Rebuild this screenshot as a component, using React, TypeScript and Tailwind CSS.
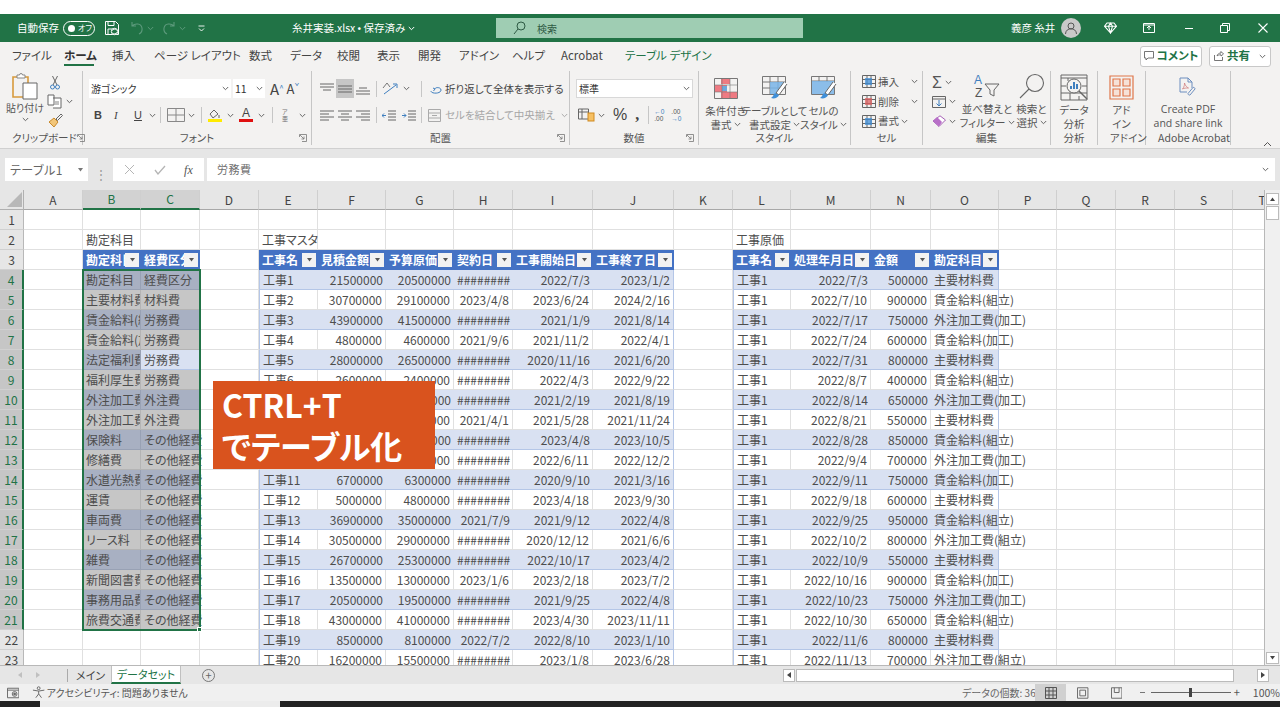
import type { ReactNode } from "react";

const COLUMNS = "ABCDEFGHIJKLMNOPQRST".split("");
const GRID = "grid grid-cols-[24px_59px_58px_59px_59px_59px_68px_68px_59px_80px_81px_59px_58px_80px_60px_68px_58px_59px_59px_58px_59px]";

const accounts = [
  ["勘定科目", "経費区分"],
  ["主要材料費", "材料費"],
  ["賃金給料(組立)", "労務費"],
  ["賃金給料(加工)", "労務費"],
  ["法定福利費", "労務費"],
  ["福利厚生費", "労務費"],
  ["外注加工費(組立)", "外注費"],
  ["外注加工費(加工)", "外注費"],
  ["保険料", "その他経費"],
  ["修繕費", "その他経費"],
  ["水道光熱費", "その他経費"],
  ["運賃", "その他経費"],
  ["車両費", "その他経費"],
  ["リース料", "その他経費"],
  ["雑費", "その他経費"],
  ["新聞図書費", "その他経費"],
  ["事務用品費", "その他経費"],
  ["旅費交通費", "その他経費"],
];

const master = [
  ["工事1", "21500000", "20500000", "########", "2022/7/3", "2023/1/2"],
  ["工事2", "30700000", "29100000", "2023/4/8", "2023/6/24", "2024/2/16"],
  ["工事3", "43900000", "41500000", "########", "2021/1/9", "2021/8/14"],
  ["工事4", "4800000", "4600000", "2021/9/6", "2021/11/2", "2022/4/1"],
  ["工事5", "28000000", "26500000", "########", "2020/11/16", "2021/6/20"],
  ["工事6", "2600000", "2400000", "########", "2022/4/3", "2022/9/22"],
  ["工事7", "9800000", "9300000", "########", "2021/2/19", "2021/8/19"],
  ["工事8", "12600000", "12000000", "2021/4/1", "2021/5/28", "2021/11/24"],
  ["工事9", "33600000", "32000000", "########", "2023/4/8", "2023/10/5"],
  ["工事10", "18900000", "18000000", "########", "2022/6/11", "2022/12/2"],
  ["工事11", "6700000", "6300000", "########", "2020/9/10", "2021/3/16"],
  ["工事12", "5000000", "4800000", "########", "2023/4/18", "2023/9/30"],
  ["工事13", "36900000", "35000000", "2021/7/9", "2021/9/12", "2022/4/8"],
  ["工事14", "30500000", "29000000", "########", "2020/12/12", "2021/6/6"],
  ["工事15", "26700000", "25300000", "########", "2022/10/17", "2023/4/2"],
  ["工事16", "13500000", "13000000", "2023/1/6", "2023/2/18", "2023/7/2"],
  ["工事17", "20500000", "19500000", "########", "2021/9/25", "2022/4/8"],
  ["工事18", "43000000", "41000000", "########", "2023/4/30", "2023/11/11"],
  ["工事19", "8500000", "8100000", "2022/7/2", "2022/8/10", "2023/1/10"],
  ["工事20", "16200000", "15500000", "########", "2023/1/8", "2023/6/28"],
];

const costs = [
  ["2022/7/3", "500000", "主要材料費"],
  ["2022/7/10", "900000", "賃金給料(組立)"],
  ["2022/7/17", "750000", "外注加工費(加工)"],
  ["2022/7/24", "600000", "賃金給料(加工)"],
  ["2022/7/31", "800000", "主要材料費"],
  ["2022/8/7", "400000", "賃金給料(組立)"],
  ["2022/8/14", "650000", "外注加工費(加工)"],
  ["2022/8/21", "550000", "主要材料費"],
  ["2022/8/28", "850000", "賃金給料(組立)"],
  ["2022/9/4", "700000", "外注加工費(加工)"],
  ["2022/9/11", "750000", "賃金給料(加工)"],
  ["2022/9/18", "600000", "主要材料費"],
  ["2022/9/25", "950000", "賃金給料(組立)"],
  ["2022/10/2", "800000", "外注加工費(組立)"],
  ["2022/10/9", "550000", "主要材料費"],
  ["2022/10/16", "900000", "賃金給料(加工)"],
  ["2022/10/23", "750000", "外注加工費(加工)"],
  ["2022/10/30", "650000", "賃金給料(組立)"],
  ["2022/11/6", "800000", "主要材料費"],
  ["2022/11/13", "700000", "外注加工費(組立)"],
];

function Chev({ className = "", color = "#666" }: { className?: string; color?: string }) {
  return (
    <svg width="7" height="5" viewBox="0 0 7 5" className={className} fill="none" stroke={color} strokeWidth="1">
      <path d="M.8 1 3.5 3.7 6.2 1" />
    </svg>
  );
}

function Launcher() {
  return (
    <svg width="8" height="8" viewBox="0 0 8 8" fill="none" stroke="#777" strokeWidth=".8">
      <path d="M.5 3V.5h7v7H3" />
      <path d="M1 1l4 4M5 2.5V5H2.5" />
    </svg>
  );
}

// ribbon group: content on top, caption row with optional dialog launcher
function Group({ w, label, launcher, children }: { w: string; label: string; launcher?: boolean; children: ReactNode }) {
  return (
    <div className={`${w} h-[74px] shrink-0 flex flex-col border-r border-[#c6c6c6]`}>
      <div className="h-[60px] flex">{children}</div>
      <div className="h-[14px] grid grid-cols-[12px_1fr_12px] items-center text-[10.5px] leading-[14px] text-[#555] text-center whitespace-nowrap">
        <span />
        <span>{label}</span>
        <span className="flex justify-start">{launcher && <Launcher />}</span>
      </div>
    </div>
  );
}

function BigButton({ w, icon, lines }: { w: string; icon: ReactNode; lines: ReactNode[] }) {
  return (
    <div className={`${w} flex flex-col items-center`}>
      <div className="h-[30px] flex items-center justify-center">{icon}</div>
      {lines.map((l, i) => (
        <div key={i} className="h-[13px] mt-[1px] flex items-center gap-[2px] text-[10.5px] leading-[13px] text-[#555] whitespace-nowrap">{l}</div>
      ))}
    </div>
  );
}

function AlignIcon({ rows, active }: { rows: number[][]; active?: boolean }) {
  return (
    <span className={`w-[18px] h-[19px] flex items-center justify-center ${active ? "bg-[#c6c6c6]" : ""}`}>
      <svg width="14" height="12" viewBox="0 0 14 12" stroke="#666" strokeWidth="1">
        {rows.map((r, i) => (
          <line key={i} x1={r[0]} x2={r[1]} y1={r[2]} y2={r[2]} />
        ))}
      </svg>
    </span>
  );
}

function HeaderCell({ text }: { text: string }) {
  return (
    <div className="relative h-5 bg-[#4472c4] text-white font-bold px-[3px] text-[12px] leading-[19px] overflow-hidden whitespace-nowrap">
      {text}
      <span className="absolute right-[2px] top-[3px] w-[14px] h-[14px] bg-[#f2f2f2] flex items-center justify-center">
        <svg width="7" height="4" viewBox="0 0 7 4"><path d="M1 0h5L3.5 3.5z" fill="#555" /></svg>
      </span>
    </div>
  );
}

function Plain({ text = "", right, clip, cls = "bg-white border-r border-b border-[#e0e0e0]" }: { text?: string; right?: boolean; clip?: boolean; cls?: string }) {
  return (
    <div className={`h-5 px-[3px] text-[12px] leading-[19px] whitespace-nowrap text-[#4d4d4d] ${cls} ${right ? "text-right" : ""} ${clip ? "overflow-hidden" : ""}`}>
      {text}
    </div>
  );
}

const BAND = "bg-[#d9e1f2] border-b border-[#b4c6e7]";
const BANDL = "bg-[#d9e1f2] border-b border-l border-[#b4c6e7]";
const BANDR = "bg-[#d9e1f2] border-b border-r border-[#b4c6e7]";
const WHITE = "bg-white border-b border-r border-[#e0e0e0]";
const WHITEL = "bg-white border-b border-l border-r border-l-[#b4c6e7] border-y-[#e0e0e0] border-r-[#e0e0e0]";
const WHITEE = "bg-white border-b border-[#e0e0e0] border-b-[#b4c6e7]";
const SELBAND = "bg-[#a8b0c2] border-b border-r border-[#98a1b4]";
const SELGRAY = "bg-[#c6c6c6] border-b border-r border-[#b4b4b4]";

function Row({ n }: { n: number }) {
  const selected = n >= 4 && n <= 21;
  const cells: ReactNode[] = [];
  for (let c = 0; c < COLUMNS.length; c++) {
    const col = COLUMNS[c];
    const key = col + n;
    const band = n % 2 === 0;
    if (n === 2 && col === "B") cells.push(<Plain key={key} text="勘定科目" />);
    else if (n === 2 && col === "E") cells.push(<Plain key={key} text="工事マスタ" />);
    else if (n === 2 && col === "L") cells.push(<Plain key={key} text="工事原価" />);
    else if (n === 3 && "BC".includes(col)) cells.push(<HeaderCell key={key} text={col === "B" ? "勘定科目" : "経費区分"} />);
    else if (n === 3 && "EFGHIJ".includes(col)) cells.push(<HeaderCell key={key} text={["工事名", "見積金額", "予算原価", "契約日", "工事開始日", "工事終了日"]["EFGHIJ".indexOf(col)]} />);
    else if (n === 3 && "LMNO".includes(col)) cells.push(<HeaderCell key={key} text={["工事名", "処理年月日", "金額", "勘定科目"]["LMNO".indexOf(col)]} />);
    else if (selected && col === "B") cells.push(<Plain key={key} text={accounts[n - 4][0]} clip cls={band ? SELBAND : SELGRAY} />);
    else if (selected && col === "C") {
      const active = n === 8;
      cells.push(<Plain key={key} text={accounts[n - 4][1]} cls={active ? BANDR + " relative z-10" : (band ? SELBAND : SELGRAY) + " relative z-10"} />);
    } else if (n >= 4 && "EFGHIJ".includes(col)) {
      const i = "EFGHIJ".indexOf(col);
      const last = col === "J";
      const first = col === "E";
      const cls = band ? (first ? BANDL : last ? BANDR : BAND) : first ? WHITEL : last ? "bg-white border-b border-r border-[#e0e0e0] border-r-[#b4c6e7]" : WHITE;
      cells.push(<Plain key={key} text={master[n - 4][i]} right={i > 0} cls={cls} />);
    } else if (n >= 4 && "LMNO".includes(col)) {
      const i = "LMNO".indexOf(col);
      const text = i === 0 ? "工事1" : costs[n - 4][i - 1];
      const first = col === "L";
      const last = col === "O";
      const cls = band ? (first ? BANDL : last ? BANDR : BAND) : first ? WHITEL : last ? "bg-white border-b border-r border-[#e0e0e0] border-r-[#b4c6e7]" : WHITE;
      cells.push(<Plain key={key} text={text} right={i === 1 || i === 2} cls={cls + (last ? " relative z-10" : "")} />);
    } else cells.push(<Plain key={key} />);
  }
  return (
    <>
      <div className={`h-5 flex items-center justify-center text-[12px] ${selected ? "bg-[#c6c6c6] text-[#217346] border-r-2 border-[#217346]" : "bg-[#e6e6e6] text-[#444] border-r border-[#b8b8b8]"} border-b border-b-[#d0d0d0]`}>
        {n}
      </div>
      {cells}
    </>
  );
}

function SheetGrid() {
  const rows = Array.from({ length: 23 }, (_, i) => i + 1);
  return (
    <div className="relative w-[1264px] h-[475px] overflow-hidden shrink-0">
      <div className={`${GRID} w-[1292px]`}>
        <div className="h-5 bg-[#e6e6e6] border-r border-b border-[#b0b0b0] relative">
          <svg width="15" height="15" viewBox="0 0 15 15" className="absolute right-[1px] bottom-[2px]"><path d="M15 0v15H0z" fill="#b8b8b8" /></svg>
        </div>
        {COLUMNS.map((c) => {
          const sel = c === "B" || c === "C";
          return (
            <div key={c} className={`h-5 flex items-center justify-center text-[12px] border-r border-[#cfcfcf] ${sel ? "bg-[#d2d2d2] text-[#217346] border-b-2 border-b-[#217346]" : "bg-[#e6e6e6] text-[#444] border-b border-b-[#a8a8a8]"}`}>
              {c}
            </div>
          );
        })}
        {rows.map((n) => <Row key={n} n={n} />)}
      </div>
      {/* selection frame */}
      <div className="absolute left-[82px] top-[79px] w-[119px] h-[362px] border-2 border-[#217346] z-20">
        <span className="absolute -right-[3px] -bottom-[3px] w-[5px] h-[5px] bg-[#217346] border border-white" />
      </div>
    </div>
  );
}

function SaveIcon() {
  return (
    <svg width="14" height="15" viewBox="0 0 14 15" fill="none" stroke="#fff" strokeWidth="1">
      <path d="M.5.5h10l3 3v10H.5z" />
      <path d="M3 .5v4h6v-4M3 13.5V8h5" />
      <circle cx="9.5" cy="10.5" r="3.2" fill="#217346" />
      <path d="M7.5 9.5a2.4 2.4 0 0 1 4-.5M11.5 11.5a2.4 2.4 0 0 1-4 .5" />
    </svg>
  );
}

function TitleBar() {
  return (
    <div className="h-[28px] bg-[#217346] flex items-center text-white shrink-0">
      <span className="ml-[17px] w-[41px] text-[10.5px] whitespace-nowrap">自動保存</span>
      <span className="ml-[5px] w-[32px] h-[15px] rounded-full border border-white flex items-center gap-[3px] pl-[4px]">
        <span className="w-[7px] h-[7px] rounded-full bg-white" />
        <span className="text-[8px] leading-none">オフ</span>
      </span>
      <span className="ml-[10px] flex"><SaveIcon /></span>
      <svg width="14" height="14" viewBox="0 0 14 14" fill="none" stroke="#5d9a7c" strokeWidth="1.1" className="ml-[11px]">
        <path d="M2 1v4h4M2 5c3-3 9-3 10 2 .4 2.5-1 5-3 6" />
      </svg>
      <Chev color="#5d9a7c" className="ml-[3px]" />
      <svg width="14" height="14" viewBox="0 0 14 14" fill="none" stroke="#5d9a7c" strokeWidth="1.1" className="ml-[8px]">
        <path d="M12 1v4H8M12 5C9 2 3 2 2 7c-.4 2.5 1 5 3 6" />
      </svg>
      <Chev color="#5d9a7c" className="ml-[3px]" />
      <svg width="7" height="7" viewBox="0 0 7 7" className="ml-[12px]" fill="none" stroke="#fff" strokeWidth=".9">
        <path d="M.5 1h6M1 3.5 3.5 6 6 3.5" />
      </svg>
      <span className="ml-[87px] w-[124px] text-[10.5px] whitespace-nowrap flex items-center gap-[3px]">糸井実装.xlsx • 保存済み <Chev color="#fff" /></span>
      <div className="ml-[80px] w-[307px] h-[20px] bg-[#9fcdb3] flex items-center text-[#2e5a44]">
        <svg width="13" height="14" viewBox="0 0 13 14" fill="none" stroke="#2e5a44" strokeWidth="1" className="ml-[17px]">
          <circle cx="8" cy="5" r="4" />
          <path d="M5 8 1 13" />
        </svg>
        <span className="ml-[11px] text-[10px]">検索</span>
      </div>
      <span className="ml-[208px] w-[44px] text-[10.5px] whitespace-nowrap">義彦 糸井</span>
      <span className="ml-[6px] w-[20px] h-[20px] rounded-full bg-[#c9c9c9] flex items-center justify-center">
        <svg width="14" height="14" viewBox="0 0 14 14" fill="none" stroke="#555" strokeWidth="1">
          <circle cx="7" cy="5" r="3" />
          <path d="M1.5 13c0-7 11-7 11 0" />
        </svg>
      </span>
      <svg width="13" height="12" viewBox="0 0 13 12" fill="none" stroke="#fff" strokeWidth="1.1" className="ml-[23px]">
        <path d="M3 1h7l2.5 3.2L6.5 11 .5 4.2zM.5 4.2h12M4.5 4.2l2 6.8 2-6.8M4.5 4.2 6.5 1l2 3.2" />
      </svg>
      <svg width="12" height="10" viewBox="0 0 12 10" fill="none" stroke="#fff" strokeWidth="1" className="ml-[26px]">
        <path d="M.5.5h11v9H.5zM6 7V3M4 5l2-2 2 2" />
        <path d="M.5 2h11" />
      </svg>
      <span className="ml-[30px] w-[8px] h-[1px] bg-white" />
      <svg width="10" height="10" viewBox="0 0 10 10" fill="none" stroke="#fff" strokeWidth="1" className="ml-[27px]">
        <path d="M.5 2.5h7v7h-7zM2.5 2.5v-2h7v7h-2" />
      </svg>
      <svg width="10" height="10" viewBox="0 0 10 10" fill="none" stroke="#fff" strokeWidth="1.1" className="ml-[28px]">
        <path d="M.5.5l9 9M9.5.5l-9 9" />
      </svg>
    </div>
  );
}

function TabBar() {
  const tabs = [
    ["ファイル", "w-[30px] ml-[12px]"],
    ["挿入", "w-[22px] ml-[18px]"],
    ["ページ レイアウト", "w-[76px] ml-[20px]"],
    ["数式", "w-[22px] ml-[19px]"],
    ["データ", "w-[28px] ml-[19px]"],
    ["校閲", "w-[22px] ml-[19px]"],
    ["表示", "w-[22px] ml-[18px]"],
    ["開発", "w-[22px] ml-[19px]"],
    ["アドイン", "w-[34px] ml-[19px]"],
    ["ヘルプ", "w-[30px] ml-[19px]"],
    ["Acrobat", "w-[43px] ml-[19px]"],
  ];
  return (
    <div className="h-[28px] bg-[#f3f2f1] flex items-center text-[11.5px] text-[#444] whitespace-nowrap shrink-0">
      <span className={tabs[0][1]}>{tabs[0][0]}</span>
      <span className="ml-[22px] w-[30px] h-[28px] pt-[5px] font-bold text-[#333] relative text-center">
        ホーム
        <span className="absolute left-0 right-0 bottom-[4px] h-[2px] bg-[#217346]" />
      </span>
      {tabs.slice(1).map(([t, c]) => <span key={t} className={c}>{t}</span>)}
      <span className="ml-[21px] w-[76px] text-[#217346]">テーブル デザイン</span>
      <span className="ml-[439px] w-[62px] h-[21px] bg-white border border-[#c8c8c8] rounded-[3px] flex items-center justify-center gap-[3px] font-bold text-[#217346]">
        <svg width="10" height="10" viewBox="0 0 10 10" fill="none" stroke="#666" strokeWidth=".9"><path d="M.5.5h9v6.5H4L2 9V7H.5z" /></svg>
        コメント
      </span>
      <span className="ml-[7px] w-[62px] h-[21px] bg-white border border-[#c8c8c8] rounded-[3px] flex items-center justify-center gap-[3px] font-bold text-[#217346]">
        <svg width="10" height="10" viewBox="0 0 10 10" fill="none" stroke="#666" strokeWidth=".9"><path d="M.5 4v5.5h8V6M3 5c.5-2 2-3 4-3V.5l2.5 2.5L7 5V3.8C5 3.8 4 4 3 5z" /></svg>
        共有
        <Chev className="ml-[6px]" />
      </span>
    </div>
  );
}

function ClipboardGroup() {
  return (
    <Group w="w-[83px]" label="クリップボード" launcher>
      <div className="w-[44px] flex flex-col items-center pl-[6px]">
        <svg width="26" height="28" viewBox="0 0 26 28" fill="none" className="mt-[1px]">
          <path d="M1 5h15v20H1z" stroke="#d89a3c" strokeWidth="1.6" />
          <path d="M5 6V3h2.5a1.5 1.5 0 0 1 3 0H13v3z" fill="#fff" stroke="#888" />
          <path d="M11 11h14v16H11z" fill="#fff" stroke="#666" />
        </svg>
        <span className="text-[10px] leading-[13px] text-[#555] mt-[1px] whitespace-nowrap">貼り付け</span>
        <Chev className="mt-[3px]" />
      </div>
      <div className="flex flex-col pl-[3px]">
        <svg width="10" height="15" viewBox="0 0 10 15" fill="none" stroke="#666" className="ml-[3px] mt-[4px]">
          <path d="M2.5 1 7 10M7.5 1 3 10" />
          <circle cx="2.5" cy="12" r="2" stroke="#3f7fbf" />
          <circle cx="7.5" cy="12" r="2" stroke="#3f7fbf" />
        </svg>
        <span className="flex items-center gap-[3px] mt-[4px]">
          <svg width="16" height="15" viewBox="0 0 16 15" fill="none" stroke="#666">
            <path d="M1 1h6v10H1zM6 4h8v10H6" fill="#fff" />
            <path d="M8 8h4M8 10h4" strokeWidth=".8" />
          </svg>
          <Chev />
        </span>
        <svg width="15" height="15" viewBox="0 0 15 15" fill="none" className="mt-[4px] ml-[1px]">
          <path d="M1 9l5-4 4 4-4 5z" fill="#f2c67a" stroke="#c98a2b" />
          <path d="M8 6l5-5 1.5 1.5-5 5z" stroke="#666" />
        </svg>
      </div>
    </Group>
  );
}

function FontGroup() {
  return (
    <Group w="w-[229px]" label="フォント" launcher>
      <div className="flex flex-col pl-[6px] pt-[8px]">
        <div className="flex items-center">
          <span className="w-[142px] h-[19px] bg-white flex items-center justify-between px-[2px] text-[10px] text-[#333]">
            游ゴシック<Chev />
          </span>
          <span className="ml-[2px] w-[32px] h-[19px] bg-white flex items-center justify-between px-[2px] text-[10.5px] text-[#333]">
            11<Chev />
          </span>
          <span className="ml-[5px] text-[15px] leading-none text-[#444]">A<sup className="text-[8px] text-[#3f7fbf]">^</sup></span>
          <span className="ml-[3px] text-[13px] leading-none text-[#444]">A<sup className="text-[8px] text-[#3f7fbf]">ˇ</sup></span>
        </div>
        <div className="flex items-center h-[20px] mt-[7px] text-[11px] text-[#444]">
          <span className="ml-[5px] w-[20px] font-bold font-['Liberation_Sans',sans-serif]">B</span>
          <span className="w-[20px] italic font-['Liberation_Serif',serif]">I</span>
          <span className="w-[15px] underline font-['Liberation_Sans',sans-serif]">U</span>
          <Chev />
          <span className="ml-[4px] h-[16px] border-l border-[#c6c6c6]" />
          <svg width="18" height="14" viewBox="0 0 18 14" fill="none" stroke="#888" className="ml-[6px]"><path d="M.5.5h17v13H.5zM9 .5v13M.5 7h17" /></svg>
          <Chev className="ml-[3px]" />
          <span className="ml-[6px] h-[16px] border-l border-[#c6c6c6]" />
          <span className="ml-[6px] w-[14px] flex flex-col items-center">
            <svg width="12" height="10" viewBox="0 0 12 10" fill="none" stroke="#666"><path d="M5 1 1 5l3 4 5-4zM10 6v3" /></svg>
            <span className="w-[14px] h-[3px] bg-[#ffeb00]" />
          </span>
          <Chev className="ml-[5px]" />
          <span className="ml-[5px] w-[14px] flex flex-col items-center leading-[10px] font-['Liberation_Sans',sans-serif] text-[12px]">
            A
            <span className="w-[14px] h-[3px] bg-[#e01010] mt-[1px]" />
          </span>
          <Chev className="ml-[5px]" />
          <span className="ml-[7px] h-[16px] border-l border-[#c6c6c6]" />
          <span className="ml-[8px] w-[8px] flex flex-col items-center text-[6px] leading-[7px] text-[#777]">ア<br />亜</span>
          <Chev className="ml-[10px]" />
        </div>
      </div>
    </Group>
  );
}

function AlignGroup() {
  return (
    <Group w="w-[258px]" label="配置" launcher>
      <div className="flex flex-col pl-[6px] pt-[8px]">
        <div className="flex items-center h-[19px]">
          <AlignIcon rows={[[0, 14, 1], [0, 14, 4], [3, 11, 7]]} />
          <AlignIcon rows={[[0, 14, 3], [0, 14, 6], [0, 14, 9]]} active />
          <AlignIcon rows={[[3, 11, 5], [0, 14, 8], [0, 14, 11]]} />
          <span className="ml-[4px] h-[16px] border-l border-[#c6c6c6]" />
          <svg width="19" height="14" viewBox="0 0 19 14" fill="none" stroke="#777" className="ml-[5px]">
            <path d="M2 12 14 3M11 2h4v4" stroke="#3f7fbf" />
            <path d="M1 6 5 1l3 4" />
          </svg>
          <Chev className="ml-[2px]" />
          <span className="ml-[11px] h-[16px] border-l border-[#c6c6c6]" />
          <svg width="12" height="14" viewBox="0 0 12 14" fill="none" stroke="#3f7fbf" className="ml-[8px]">
            <path d="M1 9c0 3 10 3 10-1 0-3-6-3-6-1M5 7 3 6M5 7 3.500 9" />
          </svg>
          <span className="ml-[3px] text-[10.5px] text-[#444] whitespace-nowrap">折り返して全体を表示する</span>
        </div>
        <div className="flex items-center h-[20px] mt-[7px]">
          <AlignIcon rows={[[0, 14, 2], [0, 9, 5], [0, 14, 8], [0, 9, 11]]} />
          <AlignIcon rows={[[0, 14, 2], [3, 11, 5], [0, 14, 8], [3, 11, 11]]} />
          <AlignIcon rows={[[0, 14, 2], [5, 14, 5], [0, 14, 8], [5, 14, 11]]} />
          <span className="ml-[4px] h-[16px] border-l border-[#c6c6c6]" />
          <svg width="14" height="11" viewBox="0 0 14 11" fill="none" stroke="#666" className="ml-[5px]">
            <path d="M6 1h8M6 4h8M6 7h8M6 10h8" />
            <path d="M4 5.500H0M2 3.500l-2 2 2 2" stroke="#3f7fbf" />
          </svg>
          <svg width="14" height="11" viewBox="0 0 14 11" fill="none" stroke="#666" className="ml-[6px]">
            <path d="M6 1h8M6 4h8M6 7h8M6 10h8" />
            <path d="M0 5.500h4M2 3.500l2 2-2 2" stroke="#3f7fbf" />
          </svg>
          <span className="ml-[5px] h-[16px] border-l border-[#c6c6c6]" />
          <svg width="13" height="13" viewBox="0 0 13 13" fill="none" stroke="#aaa" className="ml-[6px]"><path d="M.5.500h12v12H.5zM.5 4h12M.5 9h12M4 6.500h5" /></svg>
          <span className="ml-[4px] text-[10.5px] text-[#a6a6a6] whitespace-nowrap">セルを結合して中央揃え</span>
          <Chev color="#aaa" className="ml-[6px]" />
        </div>
      </div>
    </Group>
  );
}

function NumberGroup() {
  return (
    <Group w="w-[129px]" label="数値" launcher>
      <div className="flex flex-col pl-[6px] pt-[8px]">
        <span className="w-[117px] h-[19px] bg-white border border-[#d8d8d8] flex items-center justify-between px-[2px] text-[10px] text-[#333]">
          標準<Chev />
        </span>
        <div className="flex items-center h-[20px] mt-[7px] text-[#444]">
          <svg width="17" height="14" viewBox="0 0 17 14" fill="none" stroke="#666" className="ml-[2px]">
            <path d="M.5 1h10v10H.5zM.5 4h10M4 1v10" />
            <rect x="10" y="5" width="6" height="8" fill="#f6c063" stroke="#d08a20" />
          </svg>
          <Chev className="ml-[3px]" />
          <span className="ml-[8px] text-[16px] leading-none font-['Liberation_Sans',sans-serif]">%</span>
          <span className="ml-[8px] text-[16px] leading-none font-bold font-['Liberation_Serif',serif]">,</span>
          <span className="ml-[9px] h-[18px] border-l border-[#c6c6c6]" />
          <span className="ml-[5px] flex flex-col text-[6.5px] leading-[7px] text-[#555] font-['Liberation_Sans',sans-serif]"><span className="text-[#3f7fbf]">←0</span><span>.00</span></span>
          <span className="ml-[7px] flex flex-col text-[6.5px] leading-[7px] text-[#555] font-['Liberation_Sans',sans-serif]"><span>.00</span><span className="text-[#3f7fbf]">→0</span></span>
        </div>
      </div>
    </Group>
  );
}

function StyleGroup() {
  return (
    <Group w="w-[152px]" label="スタイル">
      <div className="flex pt-[2px] pl-[2px]">
        <BigButton w="w-[49px]" lines={["条件付き", <>書式 <Chev /></>]} icon={
          <svg width="24" height="21" viewBox="0 0 24 21" fill="none">
            <path d="M.5.500h23v20H.5z" stroke="#777" />
            <path d="M7 1h9v5H7zM1 7h6v7H1zM7 14h16v6H7zM7 7h6v7H7z" fill="#ee7a82" />
            <path d="M8 8h5v5H8z" fill="#6ea8dc" />
            <path d="M8 .5v20M16 .5v20M.5 7h23M.5 14h23" stroke="#777" strokeWidth=".6" />
          </svg>
        } />
        <BigButton w="w-[49px]" lines={["テーブルとして", <>書式設定 <Chev /></>]} icon={
          <svg width="26" height="24" viewBox="0 0 26 24" fill="none">
            <path d="M.5.500h23v18H.5zM.5 6h23M.5 12h23M8 .5v18M16 .5v18" stroke="#777" />
            <path d="M8 6h15v6h-6v6H8z" fill="#78b4e8" opacity=".85" />
            <path d="M22 6 14 17l3 2 8-11" fill="#fff" stroke="#666" />
            <path d="M13 17c-2 2-2 4-4 5 3 1 7 0 8-3z" fill="#3f8fd8" />
          </svg>
        } />
        <BigButton w="w-[49px]" lines={["セルの", <>スタイル <Chev /></>]} icon={
          <svg width="26" height="24" viewBox="0 0 26 24" fill="none">
            <path d="M.5.500h23v18H.5zM.5 5h23M8 .5v5M16 .5v5" stroke="#777" />
            <path d="M1 5h22v13H1z" fill="#78b4e8" opacity=".85" />
            <path d="M22 6 14 17l3 2 8-11" fill="#fff" stroke="#666" />
            <path d="M13 17c-2 2-2 4-4 5 3 1 7 0 8-3z" fill="#3f8fd8" />
          </svg>
        } />
      </div>
    </Group>
  );
}

function CellRow({ label, color, chevGap }: { label: string; color: string; chevGap: string }) {
  return (
    <div className="h-[20px] flex items-center text-[10.5px] text-[#555] whitespace-nowrap">
      <svg width="14" height="13" viewBox="0 0 14 13" fill="none" stroke="#666">
        <path d="M.5.500h13v12H.5zM.5 4.500h13M.5 8.500h13M5 .5v12M9 .5v12" />
        <rect x="3" y="3" width="7" height="7" fill={color} stroke="none" opacity=".75" />
      </svg>
      <span className="ml-[2px]">{label}</span>
      <Chev className={chevGap} />
    </div>
  );
}

function EditGroup() {
  return (
    <Group w="w-[128px]" label="編集">
      <div className="w-[38px] flex flex-col pl-[9px] pt-[2px]">
        <div className="h-[20px] flex items-center gap-[3px]">
          <span className="text-[16px] leading-none text-[#555] font-['Liberation_Sans',sans-serif]">Σ</span><Chev />
        </div>
        <div className="h-[20px] flex items-center gap-[3px]">
          <svg width="14" height="12" viewBox="0 0 14 12" fill="none" stroke="#666"><path d="M.5.500h13v11H.5zM.5 3h13" /><path d="M7 4v6M4.500 7.500 7 10l2.500-2.500" stroke="#3f7fbf" /></svg>
          <Chev />
        </div>
        <div className="h-[20px] flex items-center gap-[3px]">
          <svg width="14" height="12" viewBox="0 0 14 12" fill="none"><path d="M8 .8 13.500 5 7 11.500 1 6z" fill="#fff" stroke="#a55fb5" /><path d="M1 6l4-4 5 5-3 4.500z" fill="#b870c8" /></svg>
          <Chev />
        </div>
      </div>
      <BigButton w="w-[52px]" lines={["並べ替えと", <>フィルター <Chev /></>]} icon={
        <svg width="28" height="26" viewBox="0 0 28 26" fill="none">
          <text x="1" y="11" fontSize="12" fill="#3f7fbf" fontFamily="Liberation Sans">A</text>
          <text x="2" y="24" fontSize="12" fill="#555" fontFamily="Liberation Sans">Z</text>
          <path d="M12 11h14l-5 6v6l-4-2v-4z" stroke="#666" />
        </svg>
      } />
      <BigButton w="w-[37px]" lines={["検索と", <>選択 <Chev /></>]} icon={
        <svg width="26" height="26" viewBox="0 0 26 26" fill="none" stroke="#666" strokeWidth="1.1">
          <circle cx="16" cy="10" r="8.500" />
          <path d="M10 16 1 25" />
        </svg>
      } />
    </Group>
  );
}

function Ribbon() {
  return (
    <div className="h-[79px] bg-[#f3f2f1] flex pt-[1px] border-b border-[#d0d0d0] shrink-0">
      <ClipboardGroup />
      <FontGroup />
      <AlignGroup />
      <NumberGroup />
      <StyleGroup />
      <Group w="w-[72px]" label="セル">
        <div className="flex flex-col pl-[11px] pt-[1px]">
          <CellRow label="挿入" color="#3f8fd8" chevGap="ml-[12px]" />
          <CellRow label="削除" color="#e06060" chevGap="ml-[12px]" />
          <CellRow label="書式" color="#3f8fd8" chevGap="ml-[2px]" />
        </div>
      </Group>
      <EditGroup />
      <Group w="w-[47px]" label="分析">
        <div className="w-full pt-[1px]">
          <BigButton w="w-full" lines={["データ", "分析"]} icon={
            <svg width="28" height="27" viewBox="0 0 28 27" fill="none" stroke="#666">
              <path d="M1 1h26v25H1zM1 4h26M1 19h26M1 12h5M22 12h5M8 4v3M19 22v4M10 19v7" />
              <circle cx="14" cy="12" r="7" fill="#f3f2f1" />
              <path d="M11 15v-3M14 15V8M17 15v-5" stroke="#3f7fbf" strokeWidth="2" />
              <path d="M19 17l8 8" strokeWidth="1.400" />
            </svg>
          } />
        </div>
      </Group>
      <Group w="w-[48px]" label="アドイン">
        <div className="w-full pt-[1px]">
          <BigButton w="w-full" lines={["アド", "イン"]} icon={
            <svg width="25" height="25" viewBox="0 0 25 25" fill="#f6e2d8" stroke="#e0764a" strokeWidth="1.200">
              <path d="M1 1h23v23H1z" fill="none" />
              <path d="M4 4h7v7H4zM14 4h7v7h-7zM4 14h7v7H4zM14 14h7v7h-7z" />
            </svg>
          } />
        </div>
      </Group>
      <Group w="w-[85px]" label="Adobe Acrobat">
        <div className="w-full pt-[1px] font-['Open_Sans',sans-serif]">
          <BigButton w="w-full" lines={["Create PDF", "and share link"]} icon={
            <svg width="18" height="20" viewBox="0 0 18 20" fill="none" stroke="#6c8ebf">
              <path d="M1 1h8l4 4v6M1 1v14h7M9 1v4h4" />
              <path d="M3.500 12c2-2 2-5 2-6 1 3 2 4 4 5-3 0-4 0-6 1z" strokeWidth=".8" stroke="#d08080" />
              <path d="M11 18l5-6a1.500 1.500 0 0 0-2-1.500l-5 6a1.500 1.500 0 0 0 2 1.500z" />
            </svg>
          } />
        </div>
      </Group>
      <div className="flex-1 flex items-end justify-end pr-[8px] pb-[1px]">
        <svg width="9" height="6" viewBox="0 0 9 6" fill="none" stroke="#555"><path d="M1 5l3.500-3.500L8 5" /></svg>
      </div>
    </div>
  );
}

function FormulaBar() {
  return (
    <div className="h-[41px] bg-[#e6e6e6] shrink-0 pt-[9px] px-[5px] flex text-[#666]">
      <div className="w-[83px] h-[23px] bg-white flex items-center justify-between pl-[5px] pr-[4px] text-[12px] text-[#666] tracking-[.5px]">
        テーブル1
        <svg width="7" height="4" viewBox="0 0 7 4"><path d="M1 0h5L3.500 3.500z" fill="#777" /></svg>
      </div>
      <div className="w-[25px] flex items-center justify-center text-[#999] text-[12px]">⋮</div>
      <div className="w-[91px] h-[23px] bg-white flex items-center justify-around px-[2px]">
        <svg width="11" height="11" viewBox="0 0 11 11" stroke="#b5b5b5" fill="none"><path d="M1 1l9 9M10 1l-9 9" /></svg>
        <svg width="12" height="10" viewBox="0 0 12 10" stroke="#b5b5b5" fill="none" strokeWidth="1.300"><path d="M1 5l3 4 7-8" /></svg>
        <span className="italic text-[12px] font-['Liberation_Serif',serif] text-[#555]">fx</span>
      </div>
      <div className="ml-[3px] flex-1 h-[23px] bg-white flex items-center justify-between pl-[10px] pr-[6px] text-[11px]">
        <span className="tracking-[.5px] text-[#707070]">労務費</span>
        <Chev />
      </div>
    </div>
  );
}

function VScroll() {
  return (
    <div className="w-[16px] h-[475px] shrink-0 bg-[#f0f0f0] border-l border-[#b8b8b8] flex flex-col pt-[3px] items-center">
      <span className="w-[13px] h-[12px] bg-white border border-[#bbb] flex items-center justify-center">
        <svg width="7" height="4" viewBox="0 0 7 4"><path d="M1 4h5L3.500 .5z" fill="#444" /></svg>
      </span>
      <span className="w-[13px] h-[14px] bg-white border border-[#bbb] mt-[1px]" />
      <span className="flex-1" />
      <span className="w-[13px] h-[12px] bg-white border border-[#bbb] flex items-center justify-center mb-[1px]">
        <svg width="7" height="4" viewBox="0 0 7 4"><path d="M1 0h5L3.500 3.500z" fill="#444" /></svg>
      </span>
    </div>
  );
}

function SheetTabs() {
  return (
    <div className="h-[19px] bg-[#e6e6e6] border-t border-[#b8b8b8] shrink-0 flex items-center text-[11px] text-[#444]">
      <svg width="4" height="6" viewBox="0 0 4 6" className="ml-[18px]"><path d="M4 0v6L0 3z" fill="#c0c0c0" /></svg>
      <svg width="4" height="6" viewBox="0 0 4 6" className="ml-[14px]"><path d="M0 0v6l4-3z" fill="#c0c0c0" /></svg>
      <span className="ml-[27px] h-[13px] border-l border-[#aaa]" />
      <span className="ml-[8px] w-[35px] whitespace-nowrap">メイン</span>
      <span className="w-[70px] h-[18px] bg-white border-b-2 border-[#217346] border-l border-r border-l-[#c0c0c0] border-r-[#c0c0c0] text-[#217346] flex items-center justify-center whitespace-nowrap">データセット</span>
      <span className="ml-[21px] w-[13px] h-[13px] rounded-full border border-[#777] flex items-center justify-center text-[11px] leading-none text-[#666]">+</span>
      <span className="ml-[568px] w-[12px] h-[13px] bg-white border border-[#bbb] flex items-center justify-center">
        <svg width="4" height="6" viewBox="0 0 4 6"><path d="M4 0v6L0 3z" fill="#444" /></svg>
      </span>
      <span className="ml-[1px] w-[438px] h-[13px] bg-white border border-[#bbb]" />
      <span className="ml-[23px] w-[12px] h-[13px] bg-white border border-[#bbb] flex items-center justify-center">
        <svg width="4" height="6" viewBox="0 0 4 6"><path d="M0 0v6l4-3z" fill="#444" /></svg>
      </span>
    </div>
  );
}

function StatusBar() {
  return (
    <div className="h-[17px] bg-[#f0f0f0] shrink-0 flex items-center text-[10px] text-[#555] whitespace-nowrap">
      <svg width="13" height="12" viewBox="0 0 13 12" fill="none" stroke="#666" className="ml-[7px]"><path d="M.5 1h12v10H.5zM.5 3h12" /><circle cx="8" cy="7" r="2.500" /><circle cx="8" cy="7" r="1" fill="#666" /></svg>
      <svg width="14" height="13" viewBox="0 0 14 13" fill="none" stroke="#666" className="ml-[13px]"><circle cx="7" cy="2" r="1.500" /><path d="M1 4l6 1 6-1M7 5v3l-3 4M7 8l3 4" /></svg>
      <span className="ml-[1px]">アクセシビリティ: 問題ありません</span>
      <span className="ml-[770px] w-[36px]" />
      <span className="ml-[-30px] w-[66px] text-[#666]">データの個数: 36</span>
      <span className="ml-[7px] w-[33px] h-[17px] bg-[#d0d0d0] flex items-center justify-center">
        <svg width="12" height="12" viewBox="0 0 12 12" fill="none" stroke="#555"><path d="M.5.500h11v11H.5zM4 .5v11M8 .5v11M.5 4h11M.5 8h11" /></svg>
      </span>
      <svg width="12" height="12" viewBox="0 0 12 12" fill="none" stroke="#666" className="ml-[11px]"><path d="M.5.500h11v11H.5zM3 3h6v6H3z" /></svg>
      <svg width="12" height="12" viewBox="0 0 12 12" fill="none" stroke="#666" className="ml-[22px]"><path d="M.5.500h11v11H.5zM3.500 .5v5h5v-5" /></svg>
      <span className="ml-[18px] w-[5px] h-[1px] bg-[#777]" />
      <span className="ml-[6px] w-[84px] h-[1px] bg-[#666] flex items-center justify-center">
        <span className="w-[3px] h-[9px] bg-[#444]" />
      </span>
      <span className="ml-[3px] text-[11px] leading-none">+</span>
      <span className="ml-[13px] text-[10.5px]">100%</span>
    </div>
  );
}

export default function App() {
  return (
    <div className="relative w-[1280px] h-[720px] bg-white overflow-hidden flex flex-col font-['Noto_Sans_CJK_JP','Noto_Sans',sans-serif] [font-feature-settings:'palt']">
      <div className="h-[14px] shrink-0 bg-white" />
      <TitleBar />
      <TabBar />
      <Ribbon />
      <FormulaBar />
      <div className="flex shrink-0 [font-feature-settings:'normal']">
        <SheetGrid />
        <VScroll />
      </div>
      <SheetTabs />
      <StatusBar />
      <div className="h-[6px] shrink-0 bg-[#222] flex">
        <span className="ml-[40px] w-[240px] bg-[#ececec]" />
      </div>
      <div className="absolute left-[213px] top-[381px] w-[222px] h-[88px] bg-[#d9531e] z-30 pl-[9px] pt-[3px] text-white font-bold text-[32px] leading-[41px] whitespace-nowrap">
        CTRL+T<br />でテーブル化
      </div>
    </div>
  );
}
